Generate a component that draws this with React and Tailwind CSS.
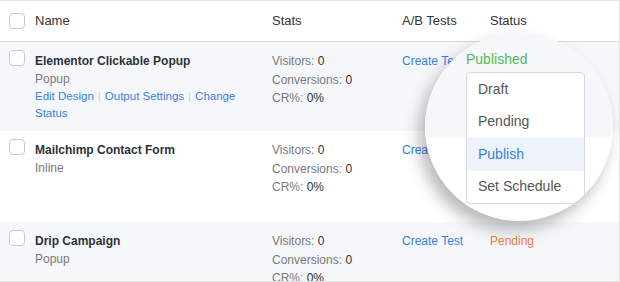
import React from 'react';

const Checkbox = () => (
  <span className="block w-4 h-4 rounded-[4px] border border-[#c8c9cd] bg-white" />
);

const Stats = () => (
  <div className="text-[12px] leading-[18.5px] text-[#7a7a7a]">
    <div>Visitors: <span className="text-[#333]">0</span></div>
    <div>Conversions: <span className="text-[#333]">0</span></div>
    <div>CR%: <span className="text-[#333]">0%</span></div>
  </div>
);

const Row = ({ bg, height, title, type, links, status }) => (
  <div className={`flex shrink-0 pt-[10px] ${bg} ${height}`}>
    <div className="w-[35px] pl-[9px] -mt-[2px]">
      <Checkbox />
    </div>
    <div className="w-[237px]">
      <div className="text-[12px] leading-[18px] font-bold text-[#2c3338]">{title}</div>
      <div className="text-[12px] leading-[18px] text-[#7a7a7a]">{type}</div>
      {links && (
        <div className="w-[215px] text-[11.5px] leading-[17px] text-[#3582e0]">
          <span className="whitespace-nowrap">Edit Design</span>
          <span className="mx-[4px] text-[#d0d0d0]">|</span>
          <span className="whitespace-nowrap">Output Settings</span>
          <span className="mx-[4px] text-[#d0d0d0]">|</span>
          Change Status
        </div>
      )}
    </div>
    <div className="w-[130px]">
      <Stats />
    </div>
    <div className="w-[88px] text-[12px] leading-[18px] text-[#3582e0]">Create Test</div>
    <div className="flex-1 text-[12px] leading-[18px]">{status}</div>
  </div>
);

export default function App() {
  return (
    <div
      className="relative w-[620px] h-[282px] overflow-hidden bg-white border-t border-r border-b border-[#e3e3e3] flex flex-col"
      style={{ fontFamily: '"Liberation Sans", Arial, sans-serif' }}
    >
      {/* header */}
      <div className="flex items-center h-[41px] shrink-0 border-b border-[#dcdcde] text-[13px] text-[#333]">
        <div className="w-[35px] pl-[9px]">
          <Checkbox />
        </div>
        <div className="w-[237px]">Name</div>
        <div className="w-[130px]">Stats</div>
        <div className="w-[88px]">A/B Tests</div>
        <div className="flex-1">Status</div>
      </div>

      <Row
        bg="bg-[#f6f7fb]"
        height="h-[89px]"
        title="Elementor Clickable Popup"
        type="Popup"
        links
        status={<span className="text-[#52b85a]">Published</span>}
      />
      <Row bg="bg-white" height="h-[91px]" title="Mailchimp Contact Form" type="Inline" />
      <Row
        bg="bg-[#f6f7fb]"
        height="h-[60px]"
        title="Drip Campaign"
        type="Popup"
        status={<span className="text-[#f27e3f]">Pending</span>}
      />

      {/* magnifier */}
      <div className="absolute left-[425px] top-[32px] w-[188px] h-[188px] rounded-full overflow-hidden bg-white shadow-[-6px_9px_16px_rgba(0,0,0,0.28)]">
        <div className="h-[104px] bg-[#f6f7fb]" />
        <div className="absolute left-[41px] top-[16px] text-[14px] leading-[20px] text-[#52b85a]">
          Published
        </div>
        <div className="absolute left-[41px] top-[39px] w-[119px] bg-white border border-[#d9d9dc] rounded-[4px] text-[14px] text-[#555]">
          <div className="h-[32.5px] flex items-center pl-[11px]">Draft</div>
          <div className="h-[32.5px] flex items-center pl-[11px]">Pending</div>
          <div className="h-[32.5px] flex items-center pl-[11px] bg-[#eef3fb] text-[#3582e0]">Publish</div>
          <div className="h-[32.5px] flex items-center pl-[11px]">Set Schedule</div>
        </div>
      </div>
    </div>
  );
}
